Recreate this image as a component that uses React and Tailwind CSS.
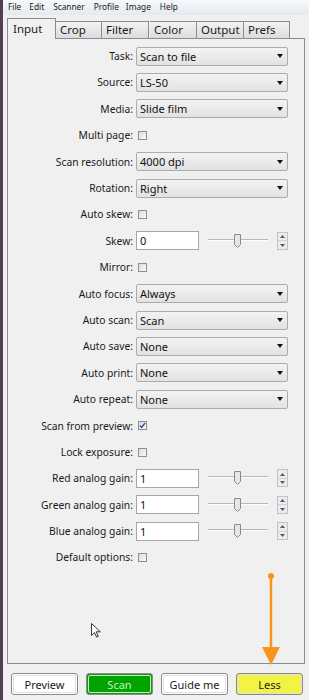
import React from 'react';

const FONT = "font-['Noto_Sans',_'Liberation_Sans',_sans-serif]";

function Select({ value }) {
  return (
    <div className="flex h-[19px] w-[152px] items-center justify-between rounded-[2px] border border-[#acacac] bg-linear-to-b from-[#f3f3f3] to-[#e2e2e2] pl-[3px] pr-[4px] text-[11px] text-[#111]">
      <span>{value}</span>
      <svg width="6" height="4" viewBox="0 0 6 4">
        <path d="M0 0h6L3 4z" fill="#111" />
      </svg>
    </div>
  );
}

function Check({ checked }) {
  return (
    <div className="ml-[2px] flex h-[9px] w-[9px] items-center justify-center border border-[#8f8f8f] bg-linear-to-br from-[#dcdcdc] to-[#fafafa]">
      {checked && (
        <svg width="7" height="7" viewBox="0 0 7 7">
          <path d="M1 3.5l1.7 2L6 1" stroke="#2b4c9b" strokeWidth="1.3" fill="none" />
        </svg>
      )}
    </div>
  );
}

function SliderField({ value }) {
  return (
    <div className="flex items-center">
      <div className="flex h-[19px] w-[63px] items-center border border-[#a6a6a6] bg-white pl-[3px] text-[11px] text-[#111]">{value}</div>
      <svg width="62" height="18" viewBox="0 0 62 18" className="ml-[8px]">
        <line x1="1" y1="7.5" x2="61" y2="7.5" stroke="#b8b8b8" strokeWidth="1" />
        <line x1="1" y1="8.5" x2="61" y2="8.5" stroke="#fdfdfd" strokeWidth="1" />
        <path d="M27.5 2.5h6v10l-3 3l-3-3z" fill="#e6e6e6" stroke="#8a8a8a" strokeWidth="1" />
      </svg>
      <div className="ml-[8px] flex h-[18px] w-[11px] flex-col border border-[#c2c2c2] bg-[#ececec]">
        <div className="flex flex-1 items-center justify-center border-b border-[#d2d2d2]">
          <svg width="5" height="3" viewBox="0 0 5 3"><path d="M0 3h5L2.5 0z" fill="#4a5a7a" /></svg>
        </div>
        <div className="flex flex-1 items-center justify-center">
          <svg width="5" height="3" viewBox="0 0 5 3"><path d="M0 0h5L2.5 3z" fill="#4a5a7a" /></svg>
        </div>
      </div>
    </div>
  );
}

const rows = [
  ['Task:', <Select value="Scan to file" />],
  ['Source:', <Select value="LS-50" />],
  ['Media:', <Select value="Slide film" />],
  ['Multi page:', <Check />],
  ['Scan resolution:', <Select value="4000 dpi" />],
  ['Rotation:', <Select value="Right" />],
  ['Auto skew:', <Check />],
  ['Skew:', <SliderField value="0" />],
  ['Mirror:', <Check />],
  ['Auto focus:', <Select value="Always" />],
  ['Auto scan:', <Select value="Scan" />],
  ['Auto save:', <Select value="None" />],
  ['Auto print:', <Select value="None" />],
  ['Auto repeat:', <Select value="None" />],
  ['Scan from preview:', <Check checked />],
  ['Lock exposure:', <Check />],
  ['Red analog gain:', <SliderField value="1" />],
  ['Green analog gain:', <SliderField value="1" />],
  ['Blue analog gain:', <SliderField value="1" />],
  ['Default options:', <Check />],
];

const tabs = [
  { name: 'Input', w: 'w-[49px]' },
  { name: 'Crop', w: 'w-[46px]' },
  { name: 'Filter', w: 'w-[47px]' },
  { name: 'Color', w: 'w-[47px]' },
  { name: 'Output', w: 'w-[47px]' },
  { name: 'Prefs', w: 'w-[46px]' },
];

function Button({ children, className }) {
  return (
    <button className={`h-[22px] w-[67px] rounded-[3px] border border-[#8a8a8a] p-[1px] text-[11px] ${className}`}>
      <div className="flex h-full w-full items-center justify-center rounded-[2px] border border-[#dedede]">{children}</div>
    </button>
  );
}

export default function App() {
  return (
    <div className={`relative flex h-[700px] w-[309px] overflow-hidden bg-[#f0f0f0] text-[10.3px] leading-none text-[#1a1a1a] ${FONT}`}>
      <div className="w-[3px] bg-[#4f4050]" />
      <div className="flex flex-1 flex-col">
        <div className="flex h-[15px] items-center bg-linear-to-b from-[#f7f8fa] to-[#e4e9f1] pl-[5px] text-[8.3px]">
          <span>File</span>
          <span className="ml-[8px]">Edit</span>
          <span className="ml-[9px]">Scanner</span>
          <span className="ml-[9px]">Profile</span>
          <span className="ml-[7px]">Image</span>
          <span className="ml-[9px]">Help</span>
        </div>

        <div className="mt-[3px] flex h-[20px] items-end pl-[4px]">
          {tabs.map((t, i) =>
            i === 0 ? (
              <div key={t.name} className={`relative z-10 -mb-[1px] flex h-[21px] ${t.w} items-center border border-b-0 border-[#898c95] bg-[#f0f0f0] pl-[5px] text-[11.5px]`}>
                {t.name}
              </div>
            ) : (
              <div key={t.name} className={`flex h-[17px] ${t.w} items-center border border-b-0 border-l-0 border-[#898c95] bg-linear-to-b from-[#f3f3f3] to-[#dcdcdc] pl-[4px] text-[11.5px] ${i === 3 ? 'ml-[1px] border-l' : ''}`}>
                {t.name}
              </div>
            )
          )}
        </div>

        <div className="ml-[4px] mr-[4px] h-[626px] border border-[#898c95] pt-[4px]">
          {rows.map(([label, control]) => (
            <div key={label} className="grid h-[26.4px] grid-cols-[125px_1fr] items-center gap-x-[3px]">
              <span className="text-right">{label}</span>
              <div className="flex items-center">{control}</div>
            </div>
          ))}
        </div>

        <div className="mt-[9px] flex gap-[8px] pl-[8px]">
          <Button className="bg-white">Preview</Button>
          <Button className="bg-[#00a300] text-[#c6f3c6]">Scan</Button>
          <Button className="bg-white">Guide me</Button>
          <Button className="bg-[#f3f343] text-[#222]">Less</Button>
        </div>
      </div>

      <svg className="pointer-events-none absolute left-0 top-0" width="309" height="700" viewBox="0 0 309 700">
        <line x1="271" y1="576" x2="271" y2="650" stroke="#f7941d" strokeWidth="2.5" />
        <circle cx="271" cy="576" r="3" fill="#f7941d" />
        <path d="M262 647h18l-9 18z" fill="#f7941d" />
        <path d="M91.5 623.5v12l3-3l2.2 4.6l1.6-.8l-2.1-4.5h4.2z" fill="#fff" stroke="#222" strokeWidth="0.9" strokeLinejoin="round" />
      </svg>
    </div>
  );
}
